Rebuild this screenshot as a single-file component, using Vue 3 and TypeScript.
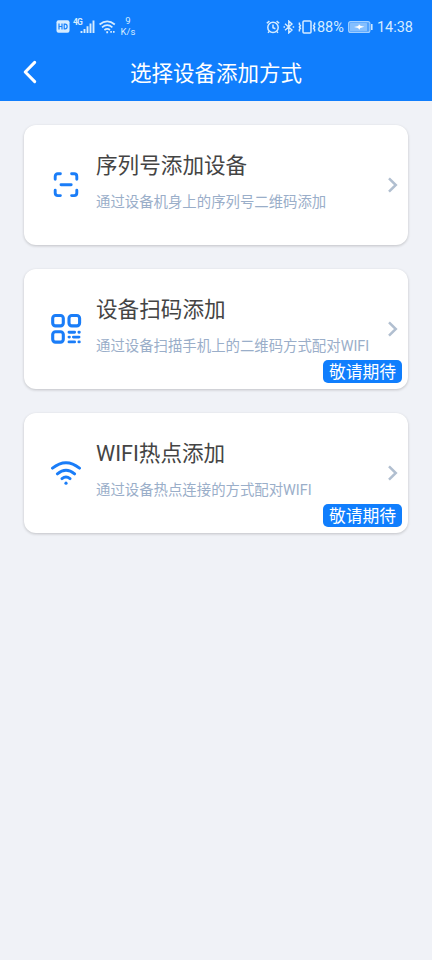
<script setup lang="ts">
interface Method {
  icon: 'scan' | 'qr' | 'wifi'
  title: string
  desc: string
  soon: boolean
}

const methods: Method[] = [
  { icon: 'scan', title: '序列号添加设备', desc: '通过设备机身上的序列号二维码添加', soon: false },
  { icon: 'qr', title: '设备扫码添加', desc: '通过设备扫描手机上的二维码方式配对WIFI', soon: true },
  { icon: 'wifi', title: 'WIFI热点添加', desc: '通过设备热点连接的方式配对WIFI', soon: true },
]
</script>

<template>
  <div class="screen">
    <header class="header">
      <div class="status">
        <div class="status-left">
          <svg class="hd" width="14" height="13" viewBox="0 0 14 13">
            <rect x="0.5" y="0.3" width="13" height="12.4" rx="2" fill="#d6ecff" />
            <path d="M3 3.5v6M6 3.5v6M3 6.5h3M8.2 4.1v4.8h1c2.6 0 2.6-4.8 0-4.8z" fill="none" stroke="#1680fb" stroke-width="1.2" />
          </svg>
          <span class="net">4G</span>
          <svg class="signal" width="16" height="14" viewBox="0 0 16 14">
            <path d="M1.5 11v2M4.5 9v4M7.5 6.2v6.8M10.5 3.5v9.5M13.5 .5v12.5" stroke="#d6ecff" stroke-width="1.9" />
          </svg>
          <svg class="wlan" width="18" height="14" viewBox="0 0 18 14" fill="none" stroke="#d6ecff" stroke-width="1.7">
            <path d="M.6 4.5Q8.2-1.8 15.8 4.5M3 7.3Q8.2 2.9 13.4 7.3M5.4 10Q8.2 7.6 11 10" />
            <path d="M7.3 12.2h1.8M11.3 11.9h1.6M14 11.9h1.6" stroke-width="1.9" />
          </svg>
          <div class="speed"><span>9</span><span>K/s</span></div>
        </div>
        <div class="status-right">
          <svg width="14" height="14" viewBox="0 0 14 14" fill="none" stroke="#d6ecff" stroke-width="1.5">
            <circle cx="7" cy="7.4" r="5.2" />
            <path d="M7 4.5v3.2l2.4 1.1M.8 3.3l2.6-2.2M13.2 3.3l-2.6-2.2M3.2 11.4l-1.1 1.5M10.8 11.4l1.1 1.5" />
          </svg>
          <svg class="bt" width="12" height="14" viewBox="0 0 12 14" fill="none" stroke="#d6ecff" stroke-width="1.4">
            <path d="M2 3.8l7 6.2-3.2 2.9V1.1L9 4 2 10.2M.5 7h1.5M9.7 7h1.5" />
          </svg>
          <svg class="vibrate" width="18" height="14" viewBox="0 0 18 14" fill="none" stroke="#d6ecff" stroke-width="1.5">
            <rect x="5" y="1" width="8" height="12" rx="1" />
            <path d="M1.4 2.4v2l1 1.1-1 1.5 1 1.5-1 1.1v2M16.6 2.4v2l-1 1.1 1 1.5-1 1.5 1 1.1v2" />
          </svg>
          <span class="percent">88%</span>
          <svg class="battery" width="25" height="12" viewBox="0 0 25 12">
            <rect x=".6" y=".6" width="21.3" height="10.8" rx="2" fill="#4fa2ff" stroke="#a3d0ff" stroke-width="1.1" />
            <rect x="2" y="2" width="17" height="8" rx=".6" fill="#84bfff" />
            <path d="M6 6.1l4.3-1.1.7-1.8 1.4 1.6 4 .9-4.2 1.2-.8 1.8-1.3-1.6z" fill="#fff" />
            <path d="M23.8 3v6" stroke="#d6ecff" stroke-width="1.5" />
          </svg>
          <span class="time">14:38</span>
        </div>
      </div>
      <div class="navbar">
        <button class="back" aria-label="返回">
          <svg width="14" height="24" viewBox="0 0 14 24">
            <path d="M11.7 2.4L2.2 12l9.5 9.6" fill="none" stroke="#fff" stroke-width="3" stroke-linecap="round" stroke-linejoin="round" />
          </svg>
        </button>
        <h1>选择设备添加方式</h1>
      </div>
    </header>

    <main class="list">
      <section v-for="m in methods" :key="m.icon" class="card">
        <div class="icon">
          <svg v-if="m.icon === 'scan'" width="32" height="32" viewBox="0 0 32 32" fill="none" stroke="#1a7df8" stroke-width="2.9" stroke-linecap="round">
            <path d="M5.2 10.2V7.4q0-2.6 2.6-2.6h2.6M21.6 4.8h2.6q2.6 0 2.6 2.6v2.8M26.8 21.2v2.8q0 2.6-2.6 2.6h-2.6M10.4 26.6H7.8q-2.6 0-2.6-2.6v-2.8M11 15.8h10.2" />
          </svg>
          <svg v-else-if="m.icon === 'qr'" width="32" height="32" viewBox="0 0 32 32" fill="none" stroke="#1a7df8" stroke-width="3.1">
            <rect x="2.7" y="2.5" width="10.6" height="10.4" rx="2.8" />
            <rect x="19" y="2.5" width="10.6" height="10.4" rx="2.8" />
            <rect x="2.7" y="18.7" width="10.6" height="10.4" rx="2.8" />
            <path d="M19 19.2h5.6M28.9 19.2h.4M19 24.1h.4M23.4 24.1h5.6M19 28.9h5.6M28.9 28.9h.4" stroke-width="2.9" stroke-linecap="round" />
          </svg>
          <svg v-else width="32" height="32" viewBox="0 0 32 32" fill="none" stroke="#1a7df8" stroke-width="2.9" stroke-linecap="round">
            <path d="M2.5 11.2q13.5-11 27 0M7.4 16.9q8.6-7.2 17.2 0M12 21.7q4-3.3 8 0" />
            <circle cx="16" cy="26.2" r="1.6" fill="#1a7df8" stroke="none" />
          </svg>
        </div>
        <div class="body">
          <h2>{{ m.title }}</h2>
          <p>{{ m.desc }}</p>
        </div>
        <svg class="arrow" width="12" height="18" viewBox="0 0 12 18">
          <path d="M2 2.3L8.8 9 2 15.7" fill="none" stroke="#b1bfd0" stroke-width="2.5" />
        </svg>
        <span v-if="m.soon" class="badge">敬请期待</span>
      </section>
    </main>
  </div>
</template>

<style>
body {
  background: #f0f2f7;
}
</style>

<style scoped>
.screen {
  min-height: 960px;
  background: #f0f2f7;
  font-family: Roboto, "Noto Sans CJK SC", sans-serif;
}
.header {
  height: 101px;
  background: #107efd;
  color: #fff;
}
.status {
  height: 45px;
  padding: 4px 19px 0 56px;
  box-sizing: border-box;
  display: flex;
  justify-content: space-between;
  color: #d6ecff;
}
.status-left,
.status-right {
  height: 45px;
  display: flex;
  align-items: center;
}
.status svg {
  display: block;
  flex: none;
}
.net {
  width: 10px;
  margin: 0 0 8px 3px;
  font-size: 8.5px;
  line-height: 9px;
  font-weight: 700;
  letter-spacing: -1px;
}
.signal {
  margin-left: -3px;
}
.wlan {
  margin-left: 3px;
}
.speed {
  width: 18px;
  margin: 0 0 1px 2px;
  display: flex;
  flex-direction: column;
  align-items: center;
  font-size: 9.5px;
  line-height: 11px;
}
.bt {
  margin-left: 3px;
}
.vibrate {
  margin-left: 3px;
}
.percent {
  margin-left: 1px;
  font-size: 14.5px;
  line-height: 17px;
  padding-top: 1px;
}
.battery {
  margin-left: 4px;
}
.time {
  margin-left: 4px;
  font-size: 14.5px;
  line-height: 17px;
  padding-top: 1px;
}
.navbar {
  height: 56px;
  display: grid;
  grid-template-columns: 60px 1fr 60px;
  align-items: center;
}
.back {
  width: 14px;
  height: 24px;
  margin: 0 0 2px 23px;
  padding: 0;
  border: 0;
  background: none;
}
.back svg {
  display: block;
}
h1 {
  margin: 0;
  padding-top: 2px;
  font-size: 21.5px;
  line-height: 32px;
  font-weight: 400;
  text-align: center;
}
.list {
  padding: 24px;
  display: flex;
  flex-direction: column;
  gap: 24px;
}
.card {
  position: relative;
  height: 120px;
  padding: 0 10px 0 26px;
  box-sizing: border-box;
  display: flex;
  align-items: center;
  background: #fff;
  border-radius: 12px;
  box-shadow: 0 1px 3px rgba(0, 0, 0, 0.2);
}
.icon {
  width: 46px;
  height: 32px;
}
.icon svg {
  display: block;
}
.body {
  flex: 1;
  align-self: flex-start;
  padding-top: 25px;
  white-space: nowrap;
}
h2 {
  margin: 0;
  font-size: 21.6px;
  line-height: 32px;
  font-weight: 400;
  color: #444;
}
p {
  margin: 10px 0 0;
  font-size: 14.4px;
  line-height: 21px;
  color: #9aaec9;
}
.arrow {
  flex: none;
  margin-right: -1px;
}
.badge {
  position: absolute;
  right: 6px;
  bottom: 6px;
  width: 79px;
  height: 23px;
  border-radius: 5px;
  background: #107efd;
  color: #fff;
  font-size: 16.8px;
  line-height: 25px;
  text-align: center;
}
</style>
